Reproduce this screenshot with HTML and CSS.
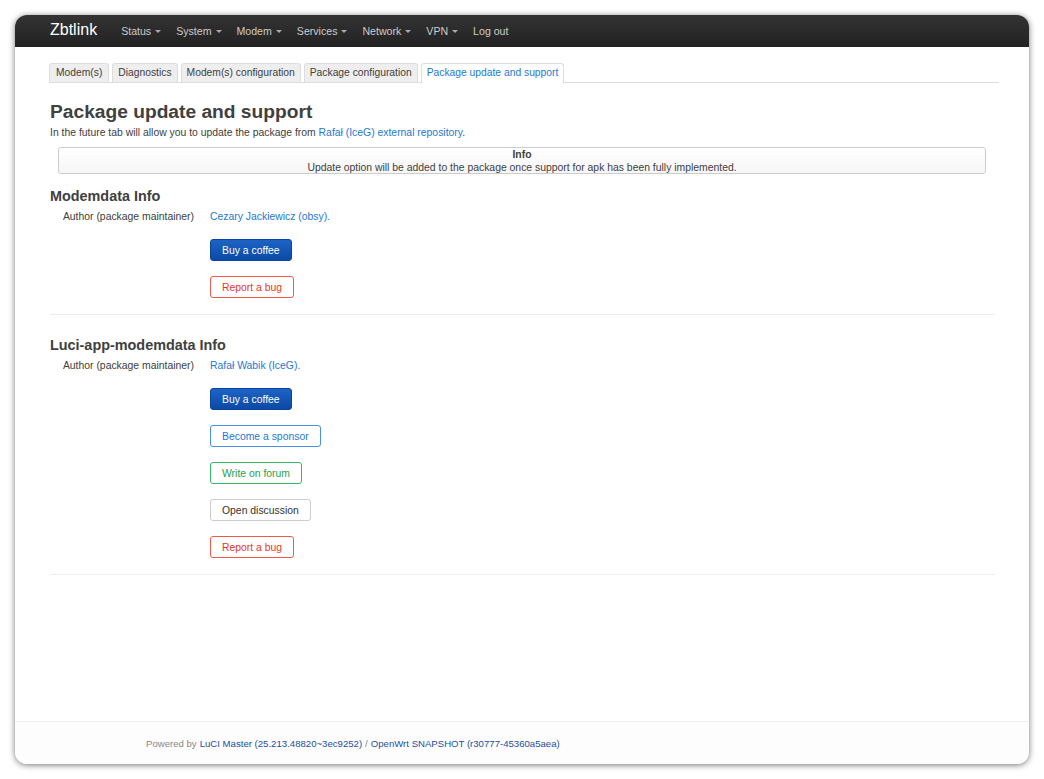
FILE: index.html
```html
<!DOCTYPE html>
<html lang="en">
<head>
<meta charset="utf-8">
<title>Zbtlink - Package update and support</title>
<link rel="stylesheet" href="styles.css">
</head>
<body>
<div class="window">
  <header class="navbar">
    <span class="brand">Zbtlink</span>
    <nav class="menu">
      <span class="menu-item">Status <i class="caret"></i></span>
      <span class="menu-item">System <i class="caret"></i></span>
      <span class="menu-item">Modem <i class="caret"></i></span>
      <span class="menu-item">Services <i class="caret"></i></span>
      <span class="menu-item">Network <i class="caret"></i></span>
      <span class="menu-item">VPN <i class="caret"></i></span>
      <span class="menu-item">Log out</span>
    </nav>
  </header>
  <main class="main">
    <ul class="tabs">
      <li class="tab">Modem(s)</li>
      <li class="tab">Diagnostics</li>
      <li class="tab">Modem(s) configuration</li>
      <li class="tab">Package configuration</li>
      <li class="tab active">Package update and support</li>
    </ul>
    <h2 class="page-title">Package update and support</h2>
    <p class="desc">In the future tab will allow you to update the package from <a class="link" href="#">Rafał (IceG) external repository</a>.</p>
    <div class="infobox">
      <strong>Info</strong>
      <span>Update option will be added to the package once support for apk has been fully implemented.</span>
    </div>

    <section class="section">
      <h3 class="section-title">Modemdata Info</h3>
      <div class="row">
        <span class="label">Author (package maintainer)</span>
        <a class="link" href="#">Cezary Jackiewicz (obsy).</a>
      </div>
      <div class="btns">
        <button class="btn btn-primary">Buy a coffee</button>
        <button class="btn btn-red">Report a bug</button>
      </div>
    </section>

    <section class="section">
      <h3 class="section-title">Luci-app-modemdata Info</h3>
      <div class="row">
        <span class="label">Author (package maintainer)</span>
        <a class="link" href="#">Rafał Wabik (IceG).</a>
      </div>
      <div class="btns">
        <button class="btn btn-primary">Buy a coffee</button>
        <button class="btn btn-blue">Become a sponsor</button>
        <button class="btn btn-green">Write on forum</button>
        <button class="btn btn-gray">Open discussion</button>
        <button class="btn btn-red">Report a bug</button>
      </div>
    </section>
  </main>
  <footer class="footer">
    Powered by <a class="flink" href="#">LuCI Master (25.213.48820~3ec9252)</a> / <a class="flink" href="#">OpenWrt SNAPSHOT (r30777-45360a5aea)</a>
  </footer>
</div>
</body>
</html>
```

FILE: styles.css
```css
html, body {
  margin: 0;
  padding: 0;
  background: #ffffff;
}
body {
  padding: 15px;
  font-family: "Liberation Sans", Arial, sans-serif;
  font-size: 10.4px;
  color: #404040;
}
.window {
  width: 1014px;
  height: 749px;
  border-radius: 12px;
  overflow: hidden;
  background: #ffffff;
  box-shadow: 0 1px 6px rgba(0, 0, 0, 0.55);
  display: flex;
  flex-direction: column;
}
.navbar {
  height: 32px;
  flex: 0 0 32px;
  background: linear-gradient(#333333, #222222);
  display: flex;
  align-items: center;
  padding-left: 35px;
}
.brand {
  color: #ffffff;
  font-size: 16px;
  margin-right: 24px;
  margin-top: -2px;
}
.menu {
  display: flex;
  gap: 15px;
}
.menu-item {
  color: #cccccc;
  font-size: 10.6px;
  display: flex;
  align-items: center;
}
.caret {
  display: inline-block;
  width: 0;
  height: 0;
  margin-left: 4px;
  border-left: 3px solid transparent;
  border-right: 3px solid transparent;
  border-top: 3px solid #aaaaaa;
}
.main {
  flex: 1;
  padding: 16px 30px 0 35px;
}
.tabs {
  list-style: none;
  margin: 0;
  padding: 0;
  display: flex;
  gap: 3px;
  border-bottom: 1px solid #dddddd;
  margin-left: -1px;
}
.tab {
  height: 18px;
  line-height: 18px;
  padding: 0 5px;
  background: #eeeeee;
  border: 1px solid #dddddd;
  border-bottom: none;
  border-radius: 3px 3px 0 0;
  color: #404040;
  font-size: 10.3px;
}
.tab:first-child {
  padding: 0 6px;
}
.tab.active {
  background: #ffffff;
  color: #1e78d2;
  margin-bottom: -1px;
  height: 19px;
}
.page-title {
  font-size: 19.2px;
  font-weight: bold;
  margin: 19px 0 4px;
  color: #404040;
  line-height: 20px;
}
.desc {
  margin: 0 0 7px;
  line-height: 14px;
}
.link {
  color: #1e78d2;
  text-decoration: none;
}
.infobox {
  margin: 0 13px 0 8px;
  height: 25px;
  border: 1px solid #cccccc;
  border-radius: 3px;
  background: linear-gradient(#ffffff, #f6f6f6);
  display: flex;
  flex-direction: column;
  align-items: center;
  justify-content: center;
  line-height: 13px;
}
.section {
  border-bottom: 1px solid #eeeeee;
  padding-bottom: 16px;
  margin-top: 14px;
  margin-right: 4px;
}
.section + .section {
  margin-top: 22px;
}
.section-title {
  font-size: 14.4px;
  font-weight: bold;
  margin: 0 0 6px;
  line-height: 16px;
}
.row {
  display: flex;
  align-items: center;
  gap: 16px;
  line-height: 14px;
}
.label {
  width: 144px;
  text-align: right;
}
.btns {
  display: flex;
  flex-direction: column;
  align-items: flex-start;
  gap: 15px;
  margin-left: 160px;
  margin-top: 15px;
}
.btn {
  font-family: "Liberation Sans", Arial, sans-serif;
  font-size: 10.4px;
  height: 22px;
  padding: 0 11px;
  border-radius: 3px;
  border: 1px solid #cccccc;
  background: #ffffff;
  color: #333333;
}
.btn-primary {
  background: linear-gradient(#1e63c4, #0b4aa6);
  border-color: #0a43a0;
  color: #ffffff;
}
.btn-red {
  border-color: #f0584b;
  color: #e8352a;
}
.btn-blue {
  border-color: #4a90e2;
  color: #1e78d2;
}
.btn-green {
  border-color: #34b865;
  color: #1f9e4e;
}
.btn-gray {
  border-color: #cccccc;
  color: #333333;
}
.footer {
  flex: 0 0 42px;
  border-top: 1px solid #eeeeee;
  padding-left: 131px;
  display: flex;
  align-items: center;
  font-size: 9.6px;
  color: #888888;
  background: #fdfdfd;
}
.flink {
  color: #1c4e9e;
  text-decoration: none;
  margin: 0 3px;
}
```
